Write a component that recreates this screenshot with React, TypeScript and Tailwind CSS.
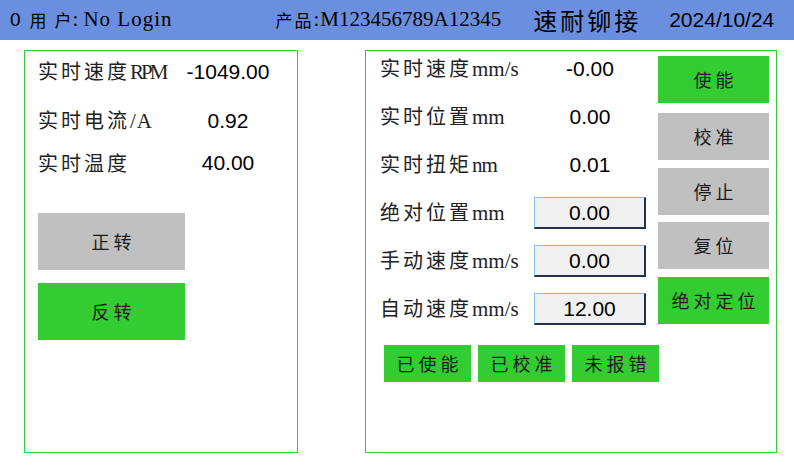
import React from 'react';

const CJK = "font-['Noto_Sans_CJK_SC',sans-serif]";
const SERIF = "font-['Liberation_Serif','Noto_Sans_CJK_SC',serif]";
const ARIAL = "font-['Liberation_Sans',Arial,sans-serif]";

interface LabelProps {
  cn: string;
  en?: string;
  enClass?: string;
}

// 中文部分加字距，英文单位用衬线字体
const Label: React.FC<LabelProps> = ({ cn, en, enClass = '' }) => (
  <span className="flex items-baseline text-[#222]">
    <span className={`${CJK} text-[20px] tracking-[3px]`}>{cn}</span>
    {en && <span className={`${SERIF} text-[21px] ${enClass}`}>{en}</span>}
  </span>
);

const Btn: React.FC<{ text: string; green?: boolean; className?: string }> = ({ text, green, className = '' }) => (
  <div
    className={`flex items-center justify-center ${CJK} text-[18px] tracking-[4px] text-[#1a1a1a] ${
      green ? 'bg-[#33cc33]' : 'bg-[#c0c0c0]'
    } ${className}`}
  >
    <span className="mr-[-4px]">{text}</span>
  </div>
);

const ValueBox: React.FC<{ value: string }> = ({ value }) => (
  <div
    className={`w-[112px] h-[32px] flex items-center justify-center bg-[#f0f0f0] border-t border-l border-[#86b9ec] border-b-2 border-r-2 border-b-[#22304a] border-r-[#22304a] ${ARIAL} text-[21px] text-black`}
  >
    {value}
  </div>
);

const App: React.FC = () => {
  const leftRows = [
    { cn: '实时速度', en: 'RPM', enClass: 'tracking-[-3px]', value: '-1049.00' },
    { cn: '实时电流', en: '/A', enClass: 'tracking-[1px]', value: '0.92' },
    { cn: '实时温度', value: '40.00' },
  ];

  const rightRows = [
    { cn: '实时速度', en: 'mm/s', value: '-0.00' },
    { cn: '实时位置', en: 'mm', value: '0.00' },
    { cn: '实时扭矩', en: 'nm', enClass: 'tracking-[-1px]', value: '0.01' },
  ];

  const inputRows = [
    { cn: '绝对位置', en: 'mm', value: '0.00' },
    { cn: '手动速度', en: 'mm/s', value: '0.00' },
    { cn: '自动速度', en: 'mm/s', value: '12.00' },
  ];

  return (
    <div className="w-[794px] h-[474px] bg-white overflow-hidden">
      {/* 顶部状态栏 */}
      <div className="h-10 bg-[#6a8fde] flex items-center text-black whitespace-nowrap">
        <span className={`ml-[10px] ${ARIAL} text-[19px]`}>0</span>
        <span className={`ml-[9px] ${CJK} text-[17px]`}>用</span>
        <span className={`ml-[8px] ${CJK} text-[17px]`}>户</span>
        <span className={`ml-[1px] ${SERIF} text-[21px]`}>:</span>
        <span className={`ml-[5px] ${SERIF} text-[21px] tracking-[1px]`}>No Login</span>
        <span className={`ml-[103px] ${CJK} text-[17px] tracking-[2px]`}>产品</span>
        <span className={`${SERIF} text-[21px]`}>:</span>
        <span className={`ml-[1px] ${SERIF} text-[21px]`}>M123456789A12345</span>
        <span className={`ml-[32px] ${CJK} text-[24px] tracking-[3px]`}>速耐铆接</span>
        <span className={`ml-[28px] ${ARIAL} text-[21px]`}>2024/10/24</span>
      </div>

      <div className="flex pt-[10px]">
        {/* 左侧面板 */}
        <div className="ml-[24px] w-[274px] h-[403px] border border-[#33cc33] flex flex-col">
          {leftRows.map((r, i) => (
            <div key={r.cn} className={`h-[42px] flex items-center ${i === 1 ? 'mt-[7px]' : ''}`}>
              <div className="w-[155px] pl-[13px]">
                <Label cn={r.cn} en={r.en} enClass={r.enClass} />
              </div>
              <div className={`w-[96px] text-center ${ARIAL} text-[21px] text-black`}>{r.value}</div>
            </div>
          ))}
          <Btn text="正转" className="mt-[29px] ml-[13px] w-[147px] h-[57px]" />
          <Btn text="反转" green className="mt-[13px] ml-[13px] w-[147px] h-[57px]" />
        </div>

        {/* 右侧面板 */}
        <div className="ml-[67px] w-[412px] h-[403px] border border-[#33cc33] flex flex-col">
          <div className="flex">
            <div className="flex flex-col gap-[12px] pl-[14px]">
              {rightRows.map((r) => (
                <div key={r.cn} className="h-[36px] flex items-center">
                  <div className="w-[154px]">
                    <Label cn={r.cn} en={r.en} enClass={r.enClass} />
                  </div>
                  <div className={`w-[112px] text-center ${ARIAL} text-[21px] text-black`}>{r.value}</div>
                </div>
              ))}
              {inputRows.map((r) => (
                <div key={r.cn} className="h-[36px] flex items-center">
                  <div className="w-[154px]">
                    <Label cn={r.cn} en={r.en} />
                  </div>
                  <ValueBox value={r.value} />
                </div>
              ))}
            </div>
            <div className="ml-[12px] pt-[5px] flex flex-col">
              <Btn text="使能" green className="w-[111px] h-[47px]" />
              <Btn text="校准" className="mt-[10px] w-[111px] h-[47px]" />
              <Btn text="停止" className="mt-[8px] w-[111px] h-[47px]" />
              <Btn text="复位" className="mt-[7px] w-[111px] h-[47px]" />
              <Btn text="绝对定位" green className="mt-[8px] w-[111px] h-[47px]" />
            </div>
          </div>
          <div className="flex mt-[18px] ml-[18px] gap-[7px]">
            <Btn text="已使能" green className="w-[87px] h-[37px] tracking-[3px]" />
            <Btn text="已校准" green className="w-[87px] h-[37px] tracking-[3px]" />
            <Btn text="未报错" green className="w-[87px] h-[37px] tracking-[3px]" />
          </div>
        </div>
      </div>
    </div>
  );
};

export default App;
